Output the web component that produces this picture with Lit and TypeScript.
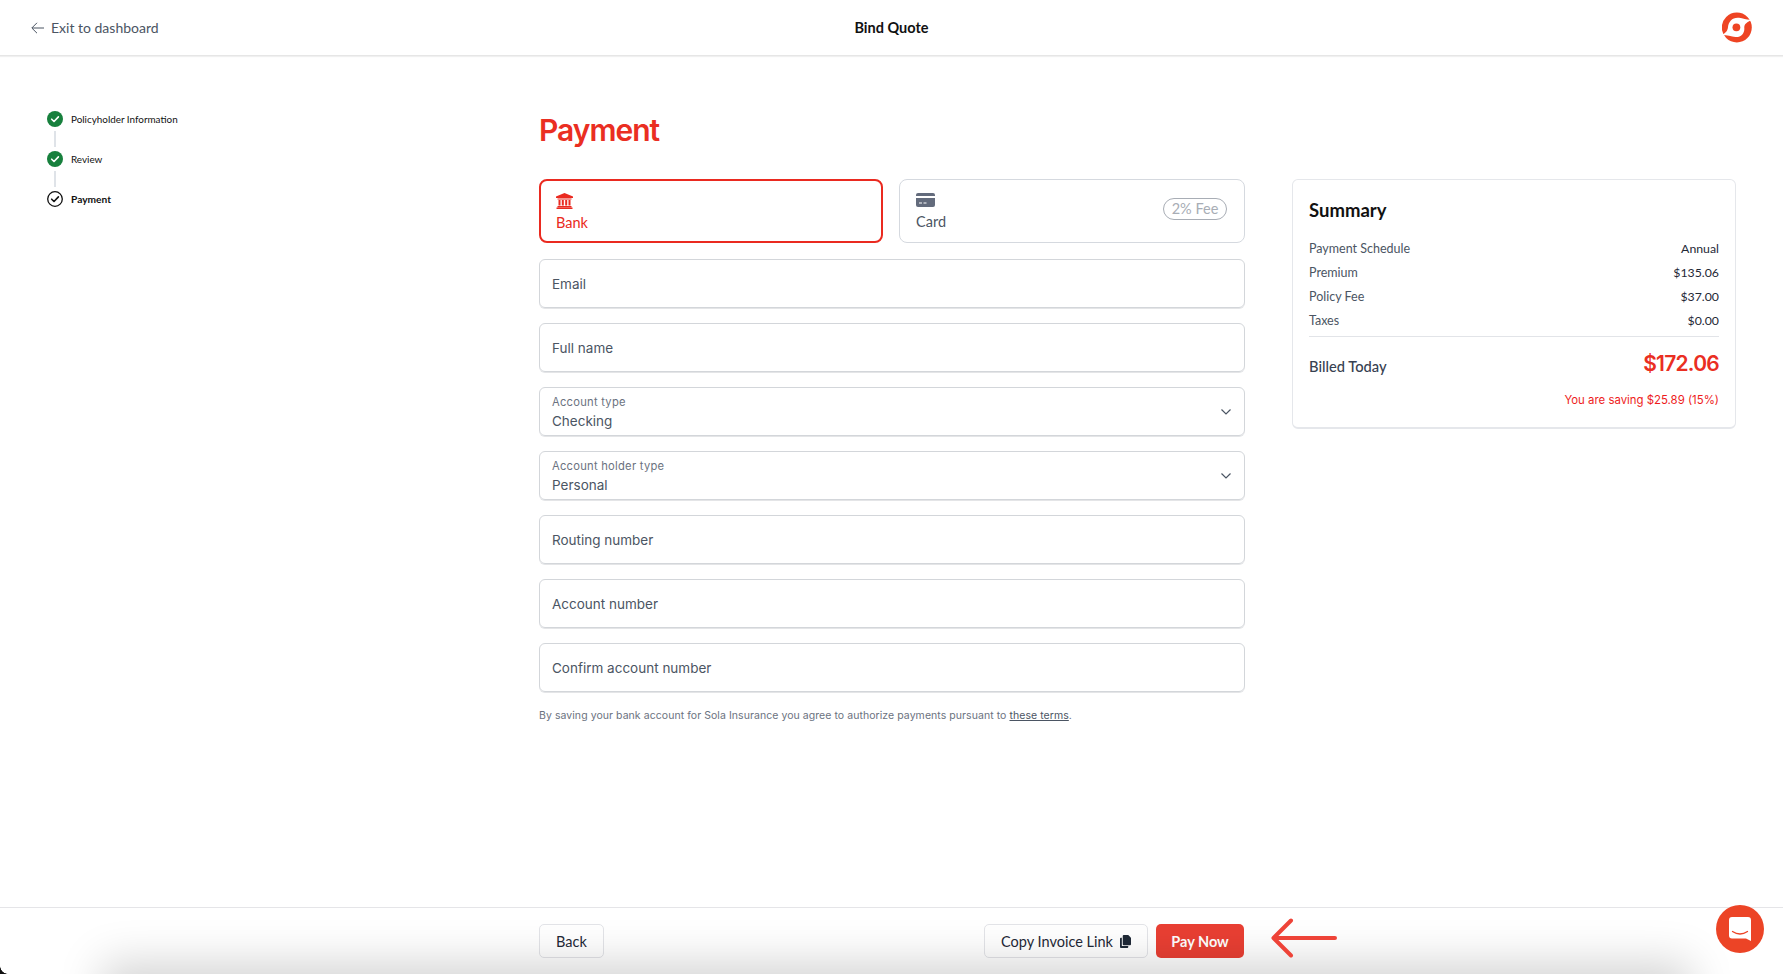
import { LitElement, html, css, svg } from "lit";
import { customElement } from "lit/decorators.js";

const check = svg`<path d="M4.700 8.200l2.300 2.300 4.400-4.600" fill="none" stroke-width="1.600" stroke-linecap="round" stroke-linejoin="round"/>`;

@customElement("app-root")
export class AppRoot extends LitElement {
  static styles = css`
    :host {
      display: block;
      position: relative;
      height: 974px;
      overflow: hidden;
      background: #fff;
      font-family: Lato, "Open Sans", sans-serif;
      color: #374151;
    }
    .page {
      height: 100%;
      display: flex;
      flex-direction: column;
    }
    header {
      height: 55px;
      flex: none;
      box-sizing: content-box;
      border-bottom: 1px solid #e6e6e6;
      box-shadow: 0 1px 1px #f0f0f0;
      display: grid;
      grid-template-columns: 1fr auto 1fr;
      align-items: center;
      padding: 0 31px 0 31px;
    }
    .exit {
      display: flex;
      align-items: center;
      gap: 7px;
      font-size: 14px;
      color: #4b5563;
    }
    .bind {
      font-size: 14.5px;
      font-weight: 700;
      color: #111;
    }
    .logo {
      justify-self: end;
      display: block;
    }
    .body {
      flex: 1;
      display: grid;
      grid-template-columns: 539px 706px 444px;
    }
    .steps {
      padding: 55px 0 0 47px;
    }
    .step {
      display: flex;
      align-items: center;
      height: 16px;
      gap: 8px;
      font-size: 9.9px;
      color: #111;
    }
    .step svg {
      display: block;
      flex: none;
    }
    .step.current {
      font-size: 10.2px;
      font-weight: 700;
    }
    .link {
      width: 2px;
      height: 16px;
      margin: 4px 0 4px 7px;
      background: #dfe3e8;
    }
    h1 {
      margin: 0;
      padding-top: 54px;
      height: 69px;
      font-size: 30px;
      line-height: 40px;
      font-weight: 600;
      color: #ea2e22;
      font-family: Inter, sans-serif;
      letter-spacing: -1px;
    }
    .tabs {
      display: grid;
      grid-template-columns: 344px 346px;
      gap: 16px;
      margin-bottom: 16px;
    }
    .tab {
      box-sizing: border-box;
      height: 64px;
      border: 1px solid #d5d9df;
      border-radius: 8px;
      padding: 12px 17px 0 16px;
      display: flex;
      justify-content: space-between;
      font-size: 14.5px;
      color: #4b5563;
    }
    .tab.on {
      border: 2px solid #ea2a20;
      padding: 12px 17px 0 15px;
      color: #ea2a20;
    }
    .tab svg {
      display: block;
      margin-bottom: 5px;
    }
    .fee {
      align-self: flex-start;
      margin: 6px 0 0;
      width: 64px;
      height: 22px;
      box-sizing: border-box;
      border: 1px solid #a8adb5;
      border-radius: 11px;
      text-align: center;
      font-size: 14.5px;
      line-height: 19px;
      color: #a8adb5;
    }
    .fields {
      display: flex;
      flex-direction: column;
      gap: 15px;
    }
    .field {
      box-sizing: border-box;
      height: 49px;
      border: 1px solid #d3d6da;
      box-shadow: 0 1px 0 #e4e5e7;
      border-radius: 6px;
      padding: 0 12px;
      display: flex;
      align-items: center;
      justify-content: space-between;
      font-family: Inter, sans-serif;
      font-size: 13.5px;
      color: #4b5563;
    }
    .field small {
      display: block;
      font-size: 11.2px;
      line-height: 14px;
      color: #6b7280;
      margin: 1px 0 4px;
      letter-spacing: 0.25px;
    }
    .field .value {
      display: block;
      line-height: 16px;
    }
    .field svg {
      margin-right: 1.500px;
    }
    .terms {
      margin: 17px 0 0;
      font-family: Inter, sans-serif;
      font-size: 10.5px;
      line-height: 14px;
      letter-spacing: 0.06px;
      color: #6b7280;
    }
    .terms u {
      color: #4b5563;
    }
    .summary {
      box-sizing: border-box;
      margin: 123px 0 0 47px;
      width: 444px;
      height: 250px;
      border: 1px solid #e5e7eb;
      border-bottom-width: 2px;
      border-radius: 6px;
      padding: 18px 16px 0;
    }
    .summary h2 {
      margin: 0 0 15px;
      font-size: 18.500px;
      line-height: 24px;
      font-weight: 700;
      color: #111;
    }
    .row {
      display: flex;
      justify-content: space-between;
      height: 24px;
      line-height: 24px;
      font-size: 12.5px;
      color: #4b5563;
    }
    .row span + span {
      color: #1f2937;
      font-size: 12.3px;
    }
    .summary hr {
      border: 0;
      border-top: 1px solid #e2e4e8;
      margin: 3px 0 0;
    }
    .total {
      box-sizing: border-box;
      display: flex;
      justify-content: space-between;
      align-items: center;
      height: 56px;
      padding-top: 2px;
      font-size: 14.7px;
      font-weight: 500;
      color: #374151;
    }
    .total b {
      margin-bottom: 6px;
      font-family: Inter, sans-serif;
      font-size: 21px;
      font-weight: 600;
      letter-spacing: -0.75px;
      color: #ea2e22;
    }
    .saving {
      text-align: right;
      font-family: Inter, sans-serif;
      font-size: 11.4px;
      color: #ee1c1c;
    }
    footer {
      flex: none;
      box-sizing: border-box;
      height: 67px;
      border-top: 1px solid #e5e5e8;
      padding: 16px 0 0 539px;
    }
    .actions {
      width: 705px;
      display: flex;
      justify-content: space-between;
    }
    .group {
      display: flex;
      gap: 8px;
    }
    button {
      box-sizing: border-box;
      height: 34px;
      border: 1px solid #e3e4e8;
      border-radius: 5px;
      background: #fff;
      font: inherit;
      font-size: 14.5px;
      color: #1f2937;
      padding: 0;
      display: flex;
      align-items: center;
      justify-content: center;
      gap: 7px;
    }
    .back {
      width: 65px;
    }
    .copy {
      width: 164px;
    }
    .pay {
      width: 88px;
      border: 0;
      background: #e93f33;
      color: #fff;
      font-weight: 700;
    }
    .shade {
      position: absolute;
      left: 120px;
      right: 110px;
      top: 980px;
      height: 30px;
      box-shadow: 0 0 44px 18px rgba(0, 0, 0, 0.17);
      pointer-events: none;
    }
    .corner {
      position: absolute;
      left: 0;
      bottom: 0;
      width: 8px;
      height: 8px;
      background: radial-gradient(circle at 100% 0, transparent 7.500px, #111 8px);
    }
    .arrow {
      position: absolute;
      left: 1270px;
      top: 918px;
    }
    .chat {
      position: absolute;
      left: 1716px;
      top: 905px;
      width: 48px;
      height: 48px;
      border-radius: 50%;
      background: #ec4426;
      display: flex;
      align-items: center;
      justify-content: center;
    }
  `;

  private field(label: string) {
    return html`<div class="field">${label}</div>`;
  }

  private select(label: string, value: string) {
    return html`<div class="field">
      <div><small>${label}</small><span class="value">${value}</span></div>
      <svg width="10" height="6" viewBox="0 0 10 6"><path d="M.5.500L5 5 9.500.500" fill="none" stroke="#4b5563" stroke-width="1.200"/></svg>
    </div>`;
  }

  private row(label: string, value: string) {
    return html`<div class="row"><span>${label}</span><span>${value}</span></div>`;
  }

  render() {
    return html`
      <div class="page">
        <header>
          <div class="exit">
            <svg width="13" height="12" viewBox="0 0 13 12"><path d="M6 .8L.8 6 6 11.2M1 6h12" fill="none" stroke="#4b5563" stroke-width="1"/></svg>
            <span>Exit to dashboard</span>
          </div>
          <div class="bind">Bind Quote</div>
          <svg class="logo" width="30" height="33" viewBox="0 0 30 33">
            <circle cx="14.800" cy="16.500" r="15" fill="#ee4423"/>
            <path d="M30.500 8.500C26 9.500 22 7.500 17 6.700 10.500 6 6.500 10.500 6 16 5.700 19.500 4 22-.6 24 5 24 9 25.500 13.500 26 19 26.500 22.800 22 22.300 17 22 13 25 11 30.500 8.500Z" fill="#fff"/>
            <circle cx="14.400" cy="16.300" r="3.900" fill="#ee4423"/>
          </svg>
        </header>
        <div class="body">
          <aside class="steps">
            <div class="step">
              <svg width="16" height="16" viewBox="0 0 16 16" stroke="#fff"><circle cx="8" cy="8" r="8" fill="#17803d" stroke="none"/>${check}</svg>
              Policyholder Information
            </div>
            <div class="link"></div>
            <div class="step">
              <svg width="16" height="16" viewBox="0 0 16 16" stroke="#fff"><circle cx="8" cy="8" r="8" fill="#17803d" stroke="none"/>${check}</svg>
              Review
            </div>
            <div class="link"></div>
            <div class="step current">
              <svg width="16" height="16" viewBox="0 0 16 16" stroke="#111"><circle cx="8" cy="8" r="7.300" fill="none" stroke-width="1.300"/>${check}</svg>
              Payment
            </div>
          </aside>
          <main>
            <h1>Payment</h1>
            <div class="tabs">
              <div class="tab on">
                <div>
                  <svg width="17" height="16" viewBox="0 0 17 16" fill="#ea2a20">
                    <path d="M8.500 0L17 3.600V5H0V3.600Z"/>
                    <path d="M1.500 5.500h14v1h-14zM2.500 7h2v5.500h-2zM5.800 7h2v5.500h-2zM9.200 7h2v5.500h-2zM12.500 7h2v5.500h-2zM1.500 13h14v1.200h-14zM.5 14.500h16V16H.5z"/>
                  </svg>
                  Bank
                </div>
              </div>
              <div class="tab">
                <div>
                  <svg width="19" height="16" viewBox="0 0 19 16">
                    <path d="M2 1h15a2 2 0 0 1 2 2v1H0V3a2 2 0 0 1 2-2z" fill="#636b7c"/>
                    <path d="M0 6h19v7a2 2 0 0 1-2 2H2a2 2 0 0 1-2-2z" fill="#636b7c"/>
                    <path d="M3 11h3M7.500 11h3" stroke="#fff" stroke-width="1"/>
                  </svg>
                  Card
                </div>
                <div class="fee">2% Fee</div>
              </div>
            </div>
            <div class="fields">
              ${this.field("Email")} ${this.field("Full name")}
              ${this.select("Account type", "Checking")}
              ${this.select("Account holder type", "Personal")}
              ${this.field("Routing number")} ${this.field("Account number")}
              ${this.field("Confirm account number")}
            </div>
            <p class="terms">
              By saving your bank account for Sola Insurance you agree to authorize payments pursuant to
              <u>these terms</u>.
            </p>
          </main>
          <section class="summary">
            <h2>Summary</h2>
            ${this.row("Payment Schedule", "Annual")} ${this.row("Premium", "$135.06")}
            ${this.row("Policy Fee", "$37.00")} ${this.row("Taxes", "$0.00")}
            <hr />
            <div class="total"><span>Billed Today</span><b>$172.06</b></div>
            <div class="saving">You are saving $25.89 (15%)</div>
          </section>
        </div>
        <footer>
          <div class="actions">
            <button class="back">Back</button>
            <div class="group">
              <button class="copy">
                Copy Invoice Link
                <svg width="11" height="13" viewBox="0 0 12 14" fill="#1f2937">
                  <path d="M4 0h5l3 3v7a1 1 0 0 1-1 1H4a1 1 0 0 1-1-1V1a1 1 0 0 1 1-1z"/>
                  <path d="M1 3h1v8.500a.5.5 0 0 0 .5.5H9v1a1 1 0 0 1-1 1H1a1 1 0 0 1-1-1V4a1 1 0 0 1 1-1z"/>
                </svg>
              </button>
              <button class="pay">Pay Now</button>
            </div>
          </div>
        </footer>
      </div>
      <div class="shade"></div>
      <div class="corner"></div>
      <svg class="arrow" width="68" height="40" viewBox="0 0 68 40">
        <path d="M21 2.500L3.500 20 21 37.500M4 20h61" fill="none" stroke="#ee4338" stroke-width="4" stroke-linecap="round" stroke-linejoin="round"/>
      </svg>
      <div class="chat">
        <svg width="22" height="24" viewBox="0 0 22 24">
          <path d="M3 0h16a3 3 0 0 1 3 3v21l-5-2.500H3a3 3 0 0 1-3-3V3a3 3 0 0 1 3-3z" fill="#fff"/>
          <path d="M3.500 14.500c5 3.300 10 3.300 15 0" fill="none" stroke="#ec4426" stroke-width="1.300" stroke-linecap="round"/>
        </svg>
      </div>
    `;
  }
}
